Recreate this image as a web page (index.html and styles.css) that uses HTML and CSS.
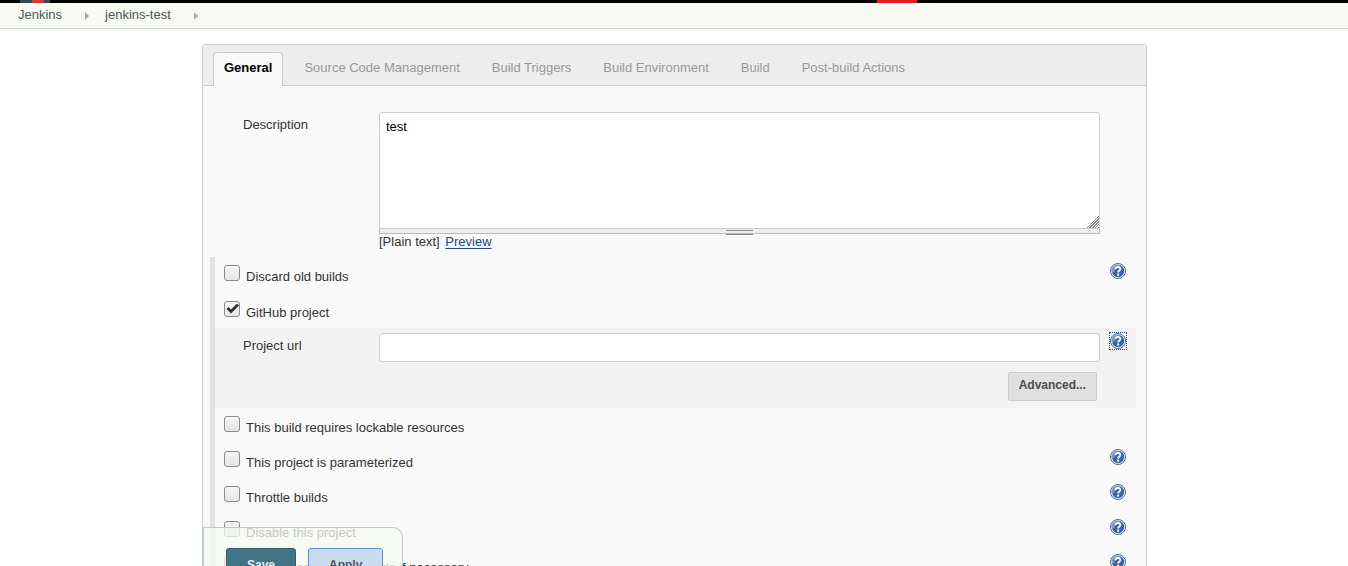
FILE: index.html
```html
<!DOCTYPE html>
<html lang="en">
<head>
  <meta charset="UTF-8">
  <meta name="viewport" content="width=device-width, initial-scale=1.0">
  <title>jenkins-test Config [Jenkins]</title>
  <link rel="stylesheet" href="styles.css">
</head>
<body>
  <!-- Shared icons -->
  <svg class="sprite" aria-hidden="true">
    <symbol id="icon-help" viewBox="0 0 16 16">
      <circle cx="8" cy="8" r="7.5" fill="#fff" stroke="#4466a0" stroke-width="1"/>
      <circle cx="8" cy="8" r="6.2" fill="#3c63a8"/>
      <path d="M2.4 10.5A6 6 0 0 1 11 2.6Q7 5 2.4 10.5z" fill="#7896c8"/>
      <path d="M5.6 6.1C5.6 3.2 10.5 3.3 10.4 6C10.3 7.6 8.100 7.500 8.100 9.600" fill="none" stroke="#fff" stroke-width="1.8"/>
      <rect x="7.100" y="10.600" width="2" height="2" fill="#fff"/>
    </symbol>
  </svg>

  <header class="topbar">
    <span class="topbar-logo"></span>
    <span class="topbar-alert"></span>
  </header>

  <nav class="breadcrumbs">
    <a href="#">Jenkins</a>
    <span class="arrow"></span>
    <a href="#">jenkins-test</a>
    <span class="arrow"></span>
  </nav>

  <form class="config">
    <!-- Section tabs -->
    <div class="tabs">
      <a class="tab active" href="#">General</a>
      <a class="tab" href="#">Source Code Management</a>
      <a class="tab" href="#">Build Triggers</a>
      <a class="tab" href="#">Build Environment</a>
      <a class="tab" href="#">Build</a>
      <a class="tab" href="#">Post-build Actions</a>
    </div>

    <div class="field description">
      <label for="description">Description</label>
      <div class="control">
        <textarea id="description">test</textarea>
        <div class="handle"></div>
        <div class="markup">[Plain text] <a href="#">Preview</a></div>
      </div>
    </div>

    <!-- Optional settings -->
    <div class="options">
      <div class="option">
        <input type="checkbox" id="discard">
        <label for="discard">Discard old builds</label>
        <a class="help" href="#" aria-label="Help"><svg><use href="#icon-help"/></svg></a>
      </div>
      <div class="option expanded">
        <input type="checkbox" id="github" checked>
        <label for="github">GitHub project</label>
      </div>
      <div class="nested">
        <div class="field">
          <label for="project-url">Project url</label>
          <div class="control">
            <input type="text" id="project-url">
          </div>
          <a class="help focused" href="#" aria-label="Help"><svg><use href="#icon-help"/></svg></a>
        </div>
        <div class="actions">
          <button type="button" class="advanced">Advanced...</button>
        </div>
      </div>
      <div class="option">
        <input type="checkbox" id="lockable">
        <label for="lockable">This build requires lockable resources</label>
      </div>
      <div class="option">
        <input type="checkbox" id="parameterized">
        <label for="parameterized">This project is parameterized</label>
        <a class="help" href="#" aria-label="Help"><svg><use href="#icon-help"/></svg></a>
      </div>
      <div class="option">
        <input type="checkbox" id="throttle">
        <label for="throttle">Throttle builds</label>
        <a class="help" href="#" aria-label="Help"><svg><use href="#icon-help"/></svg></a>
      </div>
      <div class="option">
        <input type="checkbox" id="disable">
        <label for="disable">Disable this project</label>
        <a class="help" href="#" aria-label="Help"><svg><use href="#icon-help"/></svg></a>
      </div>
      <div class="option">
        <input type="checkbox" id="concurrent">
        <label for="concurrent">Execute concurrent builds if necessary</label>
        <a class="help" href="#" aria-label="Help"><svg><use href="#icon-help"/></svg></a>
      </div>
    </div>

    <!-- Floating save bar -->
    <div class="save-bar">
      <button type="submit" class="save">Save</button>
      <button type="button" class="apply">Apply</button>
    </div>
  </form>
</body>
</html>
```
FILE: styles.css
```css
* {
  box-sizing: border-box;
}

body {
  margin: 0;
  height: 100vh;
  overflow: hidden;
  background: #fff;
  color: #333;
  font: 13px/18px "Liberation Sans", Helvetica, Arial, sans-serif;
}

input, textarea, button {
  margin: 0;
  font: inherit;
}

.sprite {
  display: none;
}

.topbar {
  display: flex;
  justify-content: space-between;
  height: 3px;
  padding: 0 431px 0 20px;
  background: #000;
}

.topbar-logo {
  width: 30px;
  background: linear-gradient(90deg, #35494e 12px, #d33833 12px 24px, #35494e 24px);
}

.topbar-alert {
  width: 40px;
  background: #e6191e;
}

.breadcrumbs {
  display: flex;
  align-items: center;
  height: 26px;
  padding: 0 18px 2px;
  background: #f6faf2;
  border-bottom: 1px solid #d3d9d3;
}

.breadcrumbs a {
  color: #4d545d;
  text-decoration: none;
}

.arrow {
  margin: 3px 16px 0 23px;
  border: solid transparent;
  border-width: 4px 0 4px 4px;
  border-left-color: #a5a9a5;
}

.config {
  margin: 15px 201px 0 202px;
  background: #f9f9f9;
  border: 1px solid #ccc;
  border-radius: 3px 3px 0 0;
}

.tabs {
  display: flex;
  gap: 10px;
  height: 41px;
  padding: 7px 10px 0;
  background: #ededed;
  border-bottom: 1px solid #ccc;
}

.tab {
  height: 34px;
  padding: 6px 10px 0;
  border: 1px solid transparent;
  border-bottom: 0;
  border-radius: 4px 4px 0 0;
  color: #999;
  text-decoration: none;
}

.tab.active {
  background: #f9f9f9;
  border-color: #ccc;
  color: #000;
  font-weight: bold;
}

.field {
  display: flex;
  align-items: flex-start;
}

.field label {
  width: 136px;
  padding-top: 4px;
}

.control {
  flex: 1;
}

.description {
  padding: 26px 46px 6px 40px;
}

textarea {
  display: block;
  width: 100%;
  height: 117px;
  padding: 5px 6px;
  border: 1px solid #ccc;
  border-radius: 3px 3px 0 0;
  outline: 0;
  background: #fff;
  color: #000;
  resize: vertical;
}

textarea::-webkit-resizer {
  background: linear-gradient(135deg, #fff 60%, transparent 60%),
    repeating-linear-gradient(135deg, #888 0 1px, #fff 1px 2px);
}

.handle {
  display: flex;
  justify-content: center;
  height: 5px;
  background: #eee;
  border: 1px solid #bbb;
  border-top: 0;
}

.handle::before {
  content: "";
  width: 27px;
  margin-top: 1px;
  height: 3px;
  border: solid #888;
  border-width: 1px 0;
}

.markup {
  height: 17px;
  line-height: 16px;
}

.markup a {
  margin-left: 2px;
  color: #204a87;
  text-underline-offset: 2px;
}

.options {
  margin-left: 7px;
  border-left: 5px solid #e1e1e1;
}

.option {
  display: flex;
  align-items: flex-start;
  gap: 6px;
  height: 35px;
  padding: 8px 20px 0 9px;
}

.option.expanded {
  height: 36px;
  padding-top: 9px;
}

.option label {
  padding-top: 3px;
}

input[type="checkbox"] {
  appearance: none;
  width: 16px;
  height: 16px;
  border: 1px solid #8c8c8c;
  border-radius: 3px;
  background: linear-gradient(#f8f8f8, #e4e4e4);
}

input[type="checkbox"]:checked {
  background: url("data:image/svg+xml,%3Csvg xmlns='http://www.w3.org/2000/svg' viewBox='0 0 14 14'%3E%3Cpath d='M2.500 6l3.500 3.500L13 2.500' fill='none' stroke='%23333' stroke-width='3'/%3E%3C/svg%3E"), linear-gradient(#f8f8f8, #e4e4e4);
}

.help {
  width: 16px;
  height: 16px;
  margin: -2px 0 0 auto;
}

.help svg {
  display: block;
  width: 16px;
  height: 16px;
}

.nested {
  margin-right: 10px;
  padding: 5px 10px 7px 28px;
  background: #f3f3f3;
}

.nested .help {
  margin: 0 0 0 10px;
}

.help.focused {
  outline: 1px dotted #204a87;
}

input[type="text"] {
  display: block;
  width: 100%;
  height: 29px;
  padding: 0 6px;
  border: 1px solid #ccc;
  border-radius: 3px;
  background: #fff;
}

.actions {
  display: flex;
  justify-content: flex-end;
  padding: 10px 29px 0 0;
}

.advanced {
  height: 29px;
  padding: 0 10px 4px;
  border: 1px solid #ccc;
  border-radius: 2px;
  background: #e0e0e0;
  color: #4d4d4d;
  font-size: 12px;
  font-weight: bold;
}

.save-bar {
  position: fixed;
  bottom: -28px;
  display: flex;
  gap: 12px;
  padding: 20px 19px 12px 22px;
  background: rgba(245, 250, 239, 0.75);
  border: 1px solid #b4d0c0;
  border-bottom: 0;
  border-radius: 0 10px 0 0;
}

.save,
.apply {
  height: 34px;
  padding: 0 20px;
  border: 1px solid #2f5f70;
  border-radius: 3px;
  background: #417487;
  color: #eee;
  font-size: 12px;
  font-weight: bold;
}

.apply {
  background: #cbdcf0;
  border-color: #5a8fd0;
  color: #4d545d;
}
```
